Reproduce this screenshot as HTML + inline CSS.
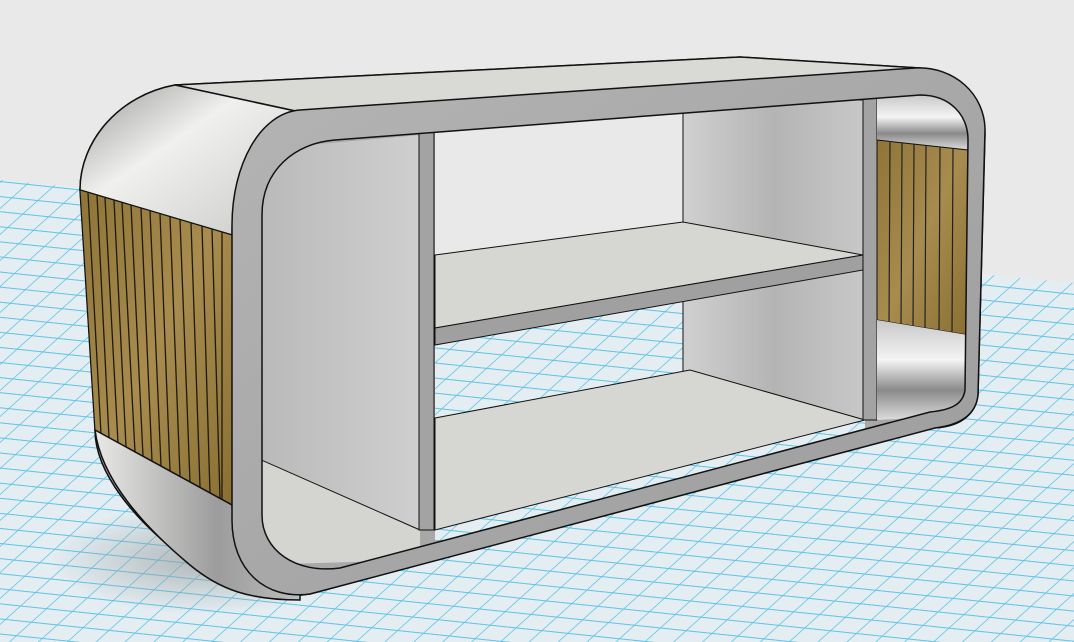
<!DOCTYPE html>
<html><head><meta charset="utf-8"><style>html,body{margin:0;padding:0;background:#e9e9e9}svg{display:block}</style></head>
<body>
<svg width="1074" height="642" viewBox="0 0 1074 642" xmlns="http://www.w3.org/2000/svg">
<defs>
<pattern id="g" width="26" height="15" patternUnits="userSpaceOnUse" patternTransform="rotate(6) skewX(-42)">
<rect width="26" height="15" fill="#e4eef2"/>
<path d="M0 0.5H26M0.5 0V15" stroke="#3cb8e4" stroke-width="1.1" opacity="0.8"/>
</pattern>
<linearGradient id="lside" x1="0" y1="0" x2="1" y2="1"><stop offset="0" stop-color="#9a9a9a"/><stop offset="0.4" stop-color="#f0f0ee"/><stop offset="1" stop-color="#c8c8c6"/></linearGradient>
<linearGradient id="llow" x1="0" y1="0" x2="1" y2="0"><stop offset="0" stop-color="#e8e8e6"/><stop offset="0.6" stop-color="#9c9c9c"/><stop offset="1" stop-color="#bdbdbd"/></linearGradient>
<linearGradient id="wood" x1="0" y1="0" x2="1" y2="1"><stop offset="0" stop-color="#8f7437"/><stop offset="0.5" stop-color="#a88c4f"/><stop offset="1" stop-color="#8a6f33"/></linearGradient>
<linearGradient id="wall" x1="0" y1="0" x2="1" y2="0"><stop offset="0" stop-color="#b8b8b8"/><stop offset="1" stop-color="#cfcfcf"/></linearGradient>
<linearGradient id="back" x1="0" y1="0" x2="1" y2="0"><stop offset="0" stop-color="#d0d0d0"/><stop offset="0.5" stop-color="#b4b4b4"/><stop offset="1" stop-color="#c8c8c8"/></linearGradient>
<linearGradient id="metal" x1="0" y1="0" x2="0" y2="1"><stop offset="0" stop-color="#c8c8c8"/><stop offset="0.4" stop-color="#f4f4f4"/><stop offset="0.7" stop-color="#8a8a8a"/><stop offset="1" stop-color="#dcdcdc"/></linearGradient>
<linearGradient id="ring" x1="0" y1="0" x2="1" y2="1"><stop offset="0" stop-color="#b4b4b4"/><stop offset="1" stop-color="#9c9c9c"/></linearGradient>
<radialGradient id="sh" cx="0.5" cy="0.5" r="0.5"><stop offset="0" stop-color="#9aa0a3" stop-opacity="0.7"/><stop offset="1" stop-color="#9aa0a3" stop-opacity="0"/></radialGradient>
</defs>
<rect width="1074" height="642" fill="#e9e9e9"/>
<polygon points="0,180 1074,283 1074,642 0,642" fill="url(#g)"/>
<ellipse cx="200" cy="560" rx="150" ry="55" fill="url(#sh)"/>
<path d="M175,85 L740,57 L920,68 C960,72 985,100 985,135 L978,395 C975,415 960,428 930,428 L310,594 C265,600 235,598 200,570 C130,520 95,470 95,430 L80,190 C80,140 120,95 175,85 Z" fill="#a8a8a8" stroke="#111" stroke-width="1.5"/>
<polygon points="250,150 420,135 420,530 250,460" fill="url(#wall)"/>
<polygon points="250,455 420,530 420,560 250,565" fill="#d4d4d0"/>
<line x1="250" y1="455" x2="420" y2="530" stroke="#111"/>
<rect x="435" y="110" width="430" height="430" fill="url(#g)"/>
<polygon points="435,110 865,90 865,222 435,262" fill="#e9e9e9"/>
<rect x="683" y="100" width="182" height="320" fill="url(#back)" stroke="#111"/>
<polygon points="435,255 683,222 863,255 435,328" fill="#d6d6d2" stroke="#111"/>
<polygon points="435,328 863,255 863,270 435,345" fill="#a0a0a0" stroke="#111"/>
<polygon points="435,418 690,370 865,420 435,530" fill="#d6d6d2" stroke="#111"/>
<rect x="419" y="125" width="15" height="405" fill="#a3a3a3" stroke="#111"/>
<rect x="863" y="90" width="14" height="330" fill="#a3a3a3" stroke="#111"/>
<polygon points="877,95 968,95 968,150 877,140" fill="url(#metal)"/>
<polygon points="877,140 968,150 968,335 877,320" fill="url(#wood)" stroke="#111"/>
<g stroke="#222" stroke-width="1.2">
<line x1="890" y1="141" x2="889" y2="325"/><line x1="902" y1="143" x2="901" y2="327"/><line x1="914" y1="144" x2="913" y2="328"/><line x1="926" y1="145" x2="925" y2="330"/><line x1="940" y1="147" x2="939" y2="332"/><line x1="953" y1="148" x2="952" y2="334"/></g>
<polygon points="877,320 968,335 968,415 877,420" fill="url(#metal)"/>
<polygon points="175,85 740,57 920,68 300,112" fill="#d9d9d6" stroke="#111" stroke-width="1.5"/>
<path d="M175,85 C120,95 80,140 80,190 L232,235 C232,170 255,118 300,112 Z" fill="url(#lside)" stroke="#111" stroke-width="1.5"/>
<polygon points="80,190 232,235 232,505 95,430" fill="url(#wood)" stroke="#111"/>
<g stroke="#1e1a10" stroke-width="1.3">
<line x1="88" y1="193" x2="101" y2="434"/><line x1="97" y1="195" x2="109" y2="438"/><line x1="105" y1="198" x2="118" y2="443"/><line x1="114" y1="200" x2="126" y2="447"/><line x1="122" y1="203" x2="135" y2="452"/><line x1="131" y1="205" x2="143" y2="456"/><line x1="141" y1="208" x2="152" y2="461"/><line x1="150" y1="211" x2="161" y2="466"/><line x1="160" y1="214" x2="170" y2="471"/><line x1="170" y1="217" x2="180" y2="476"/><line x1="180" y1="220" x2="190" y2="482"/><line x1="191" y1="223" x2="200" y2="487"/><line x1="202" y1="226" x2="210" y2="493"/><line x1="212" y1="229" x2="220" y2="498"/><line x1="222" y1="232" x2="222" y2="500"/></g>
<path d="M95,430 L232,505 C234,560 262,592 300,594 L300,600 C250,600 220,590 190,565 C130,515 100,470 95,430 Z" fill="url(#llow)" stroke="#111" stroke-width="1.5"/>
<path fill-rule="evenodd" d="M300,110 L915,68 C955,66 985,95 985,130 L978,395 C976,415 960,425 935,428 L310,594 C265,600 232,570 232,520 L232,225 C232,165 260,113 300,110 Z M335,140 L920,95 C950,95 968,115 968,140 L965,390 C963,405 950,410 930,412 L340,568 C295,574 262,550 262,515 L262,215 C262,170 295,143 335,140 Z" fill="url(#ring)" stroke="#111" stroke-width="1.5"/>
</svg>
</body></html>
